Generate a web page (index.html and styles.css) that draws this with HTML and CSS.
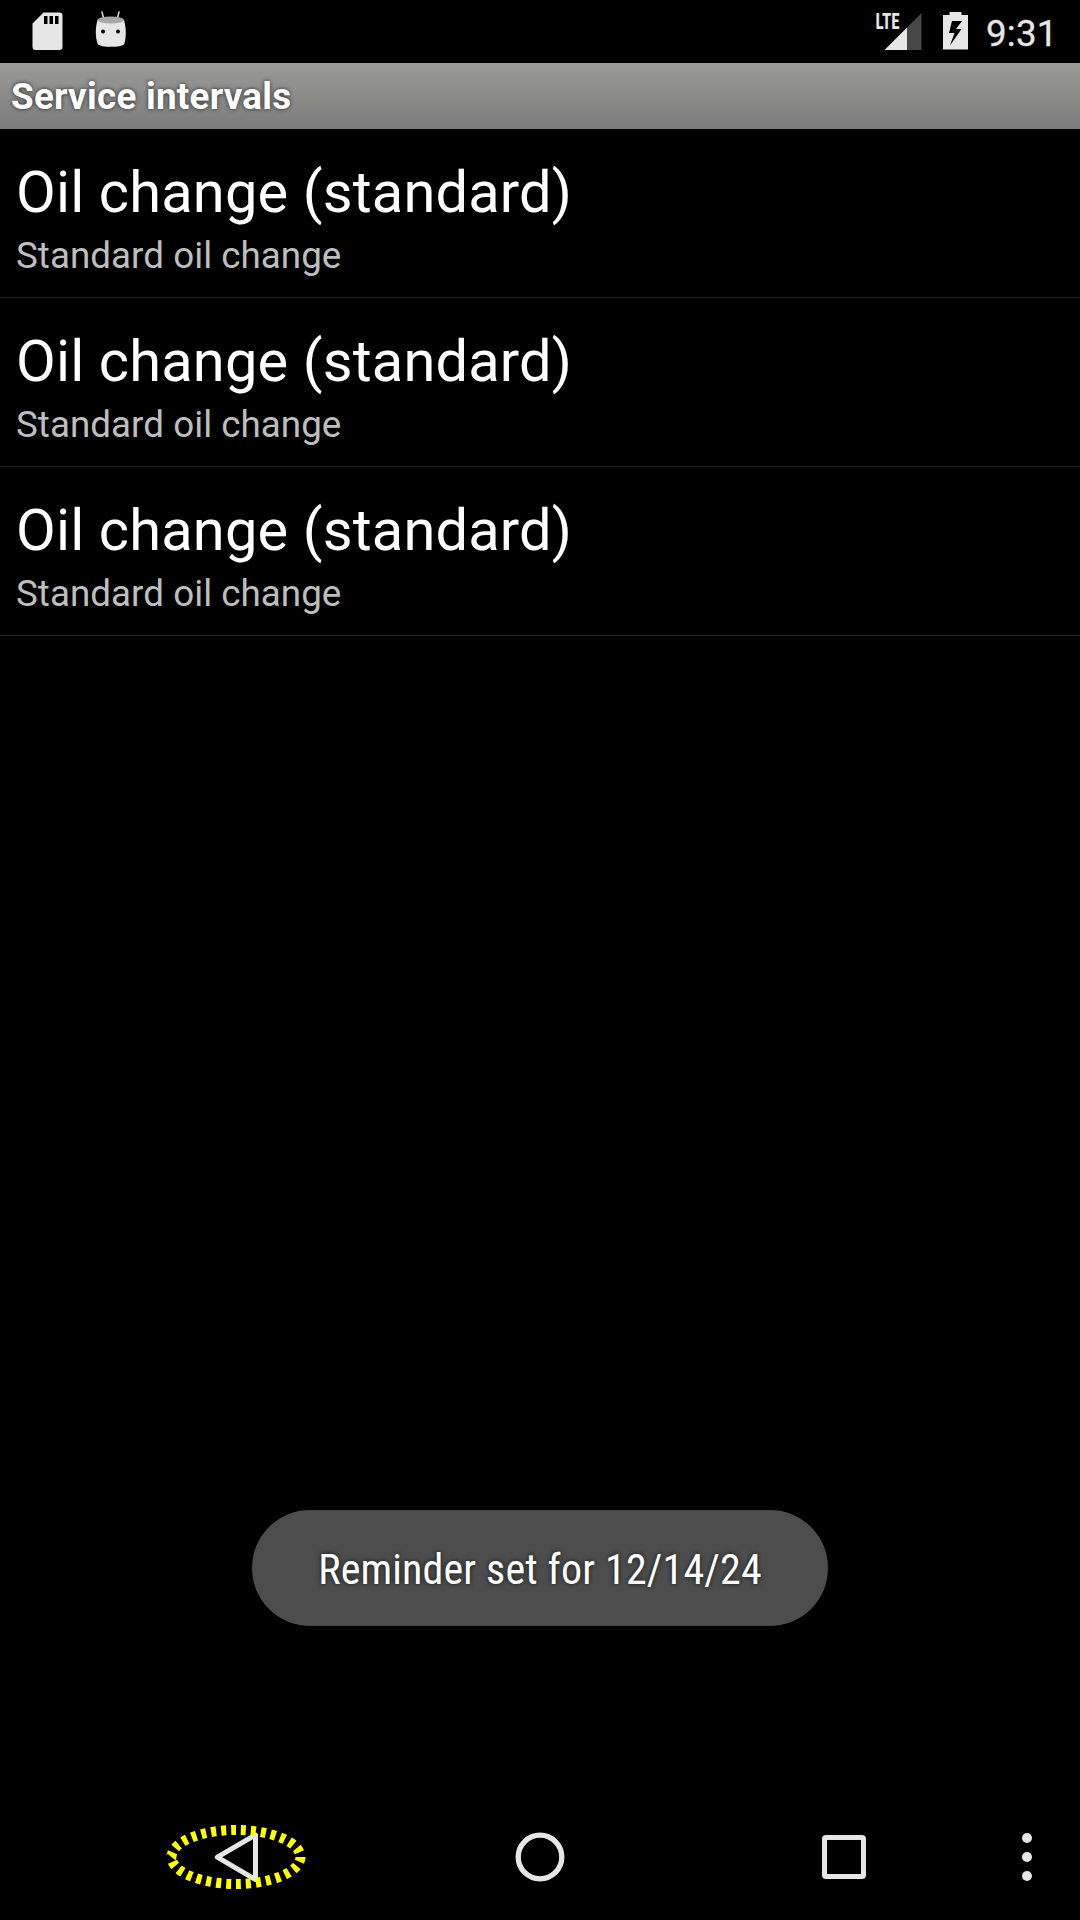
FILE: index.html
```html
<!DOCTYPE html>
<html lang="en">
<head>
<meta charset="utf-8">
<title>Service intervals</title>
<link rel="stylesheet" href="styles.css">
</head>
<body>
<div class="screen">
  <header class="status">
    <div class="status-left">
      <svg class="sd" width="31" height="39" viewBox="0 0 31 39"><path fill="#e6e6e6" fill-rule="evenodd" d="M11.5.5H27.500a3 3 0 0 1 3 3V35a3 3 0 0 1-3 3H3.500a3 3 0 0 1-3-3V11.500zM12 4v8h3.500V4zM17.500 4v8H21V4zM23 4v8h3.500V4z"/></svg>
      <svg width="32" height="37" viewBox="0 0 32 37"><path d="M7 1l2 8M24 1l-2 8" stroke="#d8d8d8" stroke-width="1.500" stroke-linecap="round"/><path fill="#e6e6e6" d="M2.500 9C.2 17 .2 26 2.700 33c3 3.800 23.600 3.800 26.600 0 2-7 2-16-.3-24z"/><ellipse cx="15.700" cy="9" rx="13.200" ry="3.500" fill="#a8a8a8"/><circle cx="8" cy="20.500" r="2" fill="#000"/><circle cx="23" cy="20.500" r="2" fill="#000"/></svg>
    </div>
    <div class="status-right">
      <svg class="signal" width="50" height="42" viewBox="-4 -4 50 42"><path fill="#474747" d="M31 14.500L45.500 0v37H31z"/><path fill="#e6e6e6" d="M31 14.500V37H8.500z"/><text class="lte" x="-0.500" y="16.300" textLength="24" lengthAdjust="spacingAndGlyphs">LTE</text></svg>
      <svg class="battery" width="25" height="38" viewBox="0 0 25 38"><path fill="#e6e6e6" fill-rule="evenodd" d="M6.500 0h12v3H25v34.500H0V3h6.500zM9 9L6 21h5.500L7 33.500 18.500 17H13l6-8z"/></svg>
      <span class="clock">9:31</span>
    </div>
  </header>
  <h1 class="title">Service intervals</h1>
  <main class="list">
    <section class="row"><div class="name">Oil change (standard)</div><div class="note">Standard oil change</div></section>
    <section class="row"><div class="name">Oil change (standard)</div><div class="note">Standard oil change</div></section>
    <section class="row"><div class="name">Oil change (standard)</div><div class="note">Standard oil change</div></section>
  </main>
  <div class="toast"><span class="toast-text">Reminder set for 12/14/24</span></div>
  <nav class="nav">
    <svg class="back" width="142" height="66" viewBox="0 0 142 66"><path d="M52.300 33.200L90.500 11v44.500z" fill="none" stroke="#e6e6e6" stroke-width="5" stroke-linejoin="round"/><ellipse cx="71" cy="33" rx="64.500" ry="27" pathLength="300" fill="none" stroke="#ff0" stroke-width="10" stroke-dasharray="5 5"/></svg>
    <svg class="home" width="50" height="50" viewBox="0 0 50 50"><circle cx="25" cy="25" r="21.800" fill="none" stroke="#e6e6e6" stroke-width="5.300"/></svg>
    <svg class="recent" width="44" height="44" viewBox="0 0 44 44"><rect x="2.500" y="2.500" width="39" height="39" rx="1.500" fill="none" stroke="#e6e6e6" stroke-width="5"/></svg>
    <svg class="more" width="10" height="48" viewBox="0 0 10 48"><g fill="#e6e6e6"><circle cx="5" cy="5" r="5"/><circle cx="5" cy="24" r="5"/><circle cx="5" cy="43" r="5"/></g></svg>
  </nav>
</div>
</body>
</html>
```
FILE: styles.css
```css
* { box-sizing: border-box; }
body { margin: 0; background: #000; font-family: Roboto, sans-serif; color: #fff; }
svg { display: block; flex: none; }
.screen { width: 1080px; height: 1920px; display: flex; flex-direction: column; overflow: hidden; }
.status { height: 63px; flex: none; display: flex; justify-content: space-between; align-items: flex-start; padding: 11px 0 0 32px; }
.status-left { display: flex; gap: 32px; }
.sd { margin-top: 1px; }
.status-right { display: flex; align-items: flex-start; }
.signal { margin-top: -2px; }
.battery { margin: 1px 18px 0 21px; }
.lte { font: 700 22px "Roboto Condensed", Roboto, sans-serif; fill: #e6e6e6; }
.clock { width: 94px; font-size: 36.750px; font-weight: 400; letter-spacing: .2px; line-height: 46px; color: #e6e6e6; -webkit-text-stroke: .3px #e6e6e6; }
.title { height: 66px; flex: none; margin: 0; padding: 1px 0 0 11px; font-size: 36.750px; font-weight: 700; letter-spacing: .28px; line-height: 66px; background: linear-gradient(#9a9a98, #7c7c7c); text-shadow: 0 0 4px rgba(0, 0, 0, .75); }
.list { flex: 1; }
.row { height: 169px; padding: 29px 16px 0; border-bottom: 1px solid #242424; }
.name { font-size: 57.750px; line-height: 68px; letter-spacing: .18px; }
.note { font-size: 36.750px; line-height: 43px; margin-top: 8px; letter-spacing: .04px; color: #bebebe; }
.toast { width: 576px; height: 116px; flex: none; align-self: center; display: flex; align-items: center; justify-content: center; padding-top: 4px; border-radius: 58px; background: #4d4d4d; margin-bottom: 168px; }
.toast-text { font-family: "Roboto Condensed", Roboto, sans-serif; font-stretch: condensed; font-size: 42px; line-height: 50px; letter-spacing: .15px; white-space: nowrap; text-shadow: 0 0 5px rgba(0, 0, 0, .75); }
.nav { height: 126px; flex: none; display: flex; align-items: center; padding-left: 165px; }
.home { margin-left: 208px; }
.recent { margin-left: 257px; }
.more { margin-left: 156px; }
```
